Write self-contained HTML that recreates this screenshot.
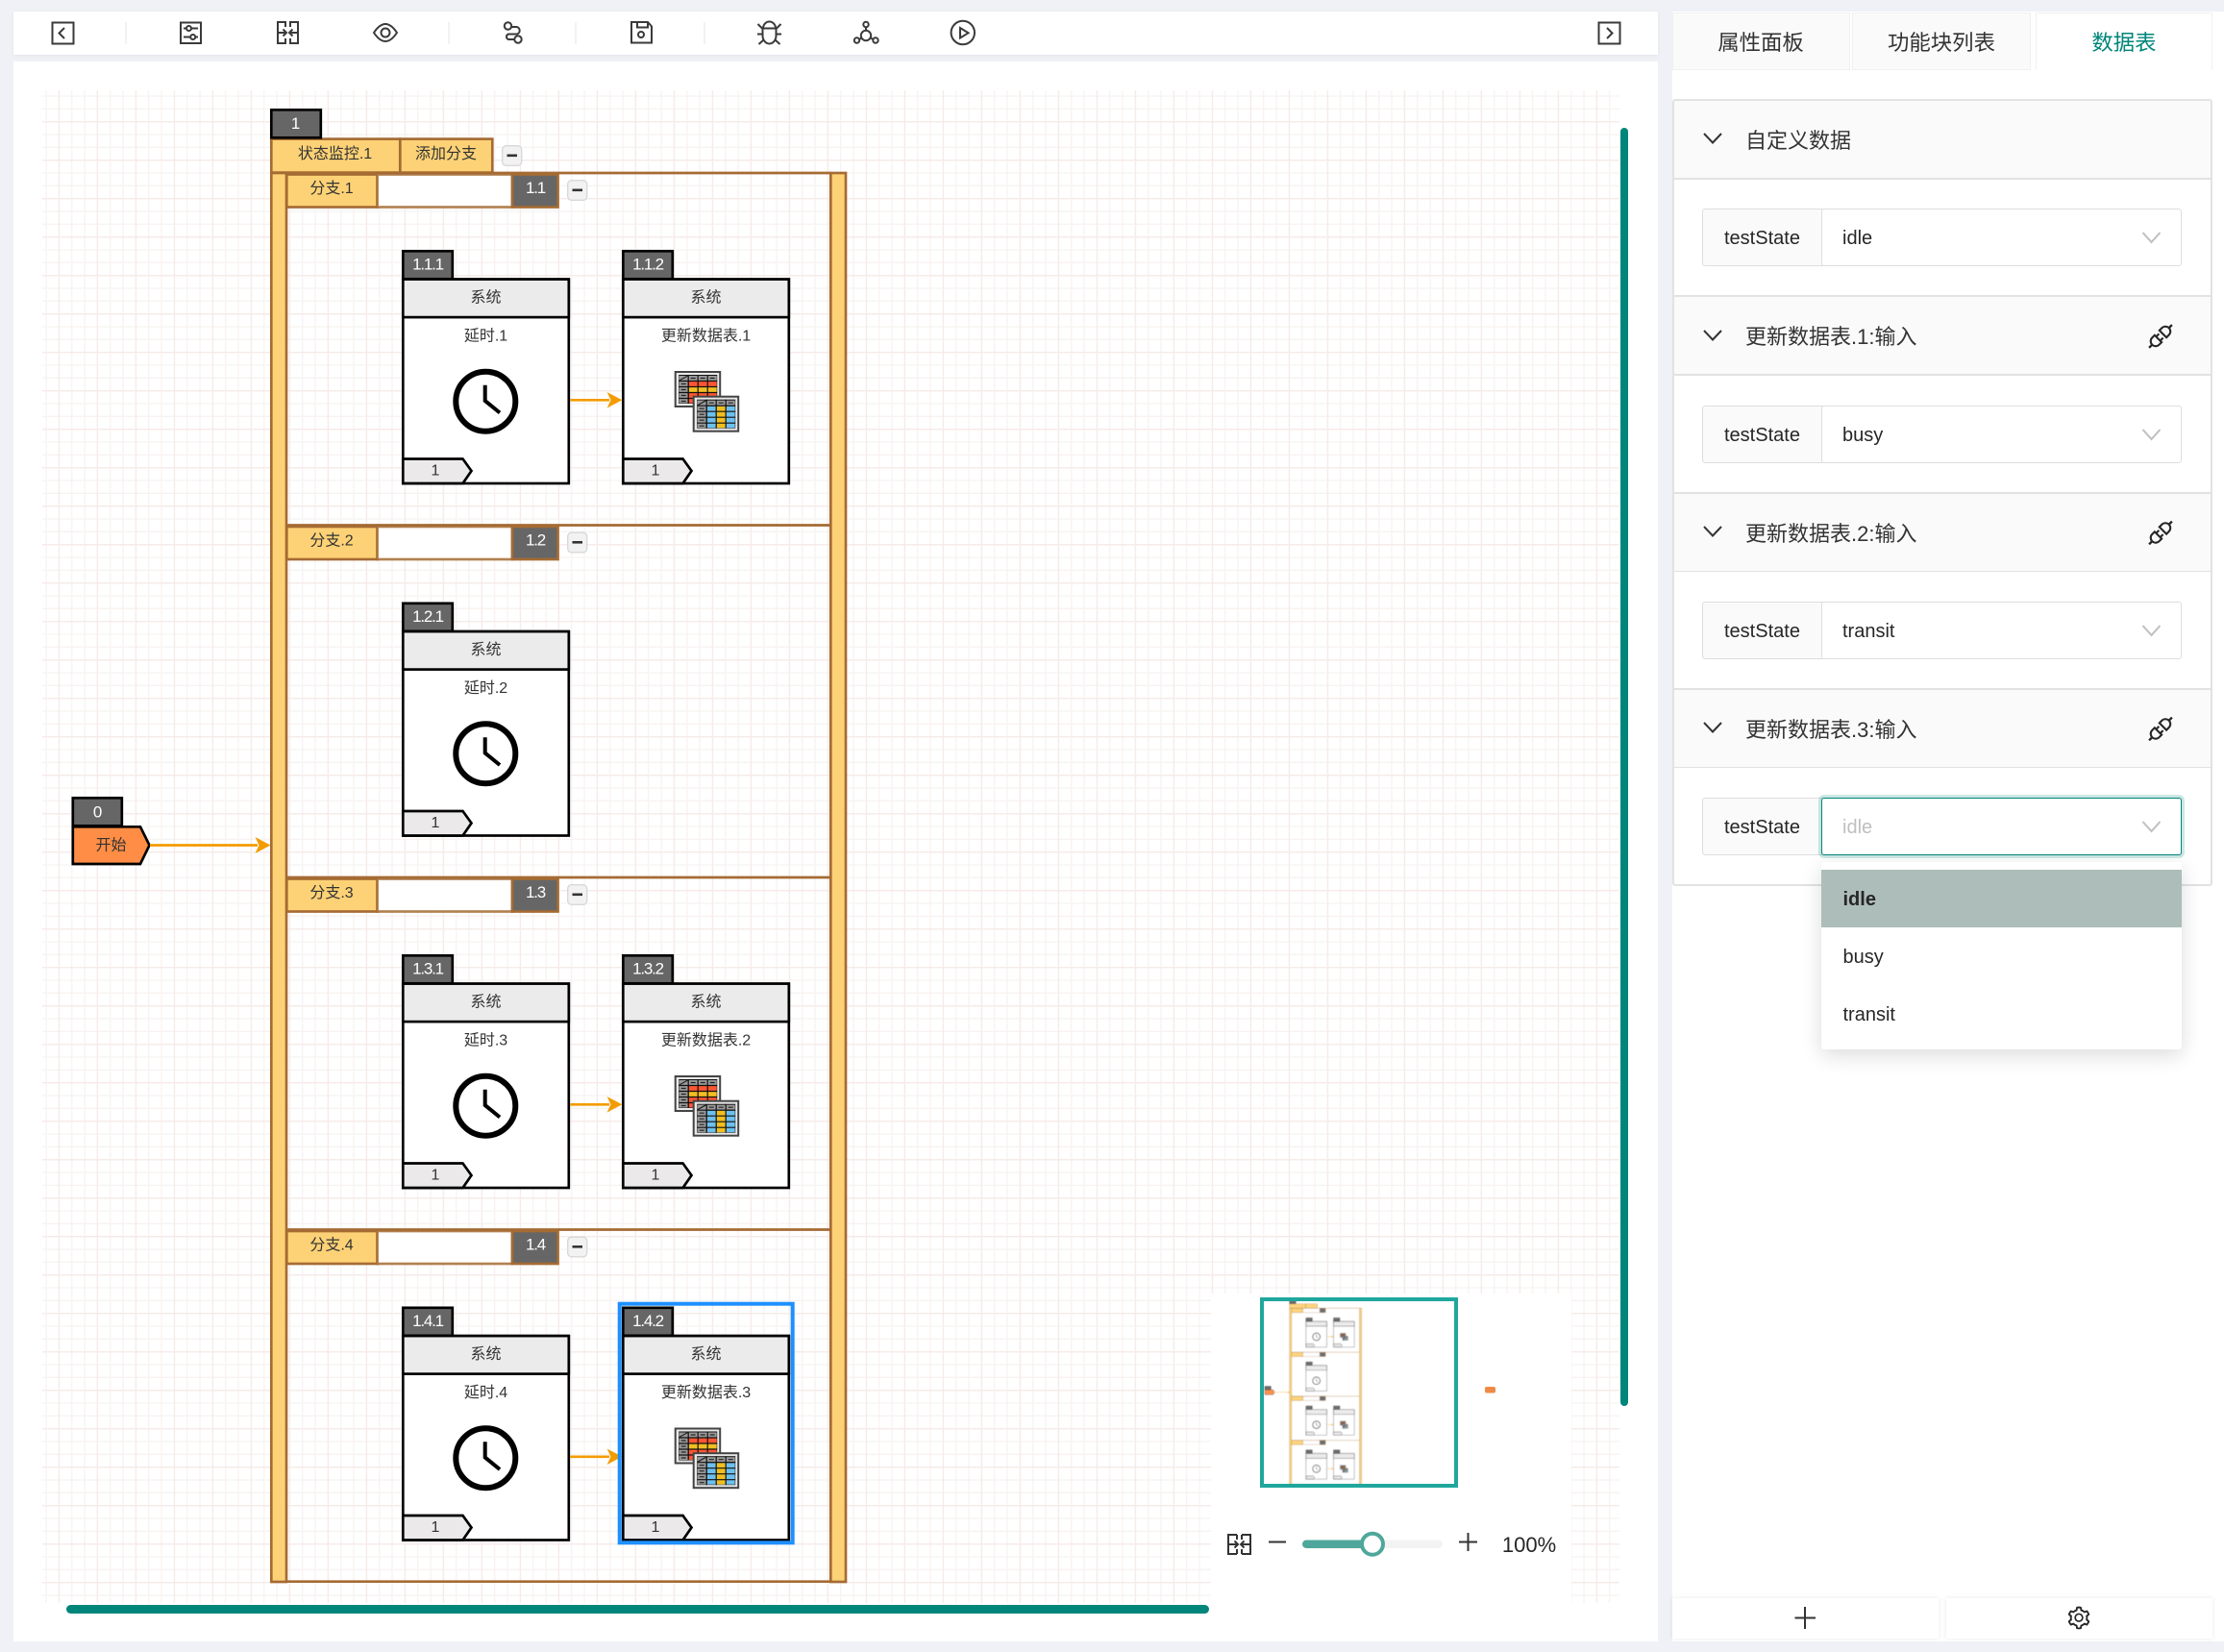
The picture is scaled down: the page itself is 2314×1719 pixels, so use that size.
<!DOCTYPE html>
<html lang="zh"><head><meta charset="utf-8"><title>流程编辑器</title>
<style>
html,body{margin:0;padding:0}
body{width:2314px;height:1719px;position:relative;overflow:hidden;background:#eff1f6;font-family:"Liberation Sans","Noto Sans CJK SC",sans-serif;color:#262626}
.a{position:absolute;box-sizing:border-box}
.tab{top:13px;height:60px;background:#fafafa;border:1px solid #f0f0f0;font-size:22.4px;display:flex;align-items:center;justify-content:center;color:#333}
.ph{left:1740px;width:562px;height:84px;background:#fafafa;border:2px solid #e2e2e2;font-size:22px;display:flex;align-items:center;padding-left:74px;color:#333}
.pb{left:1740px;width:562px;background:#fff;border-left:2px solid #e2e2e2;border-right:2px solid #e2e2e2}
.lab{left:1771px;width:126px;height:60px;background:#fafafa;border:1.5px solid #dedede;border-radius:3px 0 0 3px;font-size:20px;display:flex;align-items:center;padding:2px 0 0 22px;color:#262626}
.sel{left:1895px;width:375px;height:60px;background:#fff;border:1.5px solid #dedede;border-radius:3px;font-size:20px;display:flex;align-items:center;padding:2px 0 0 21px;color:#262626}
.opt{left:1895px;width:375px;height:60px;font-size:20px;display:flex;align-items:center;padding:2px 0 0 22.5px;color:#262626}
svg{position:absolute;overflow:visible}
svg text{font-family:"Liberation Sans","Noto Sans CJK SC",sans-serif;font-size:16px;fill:#333;text-anchor:middle;dominant-baseline:central}
svg text.w{fill:#fff;font-size:17px;letter-spacing:-1.2px}
</style></head><body>

<div class="a" style="left:14px;top:12px;width:1711px;height:45px;background:#fff;box-shadow:0 1px 4px rgba(0,0,0,.06)"></div>
<div class="a" style="left:14px;top:64px;width:1711px;height:1644px;background:#fff"></div>
<div class="a" style="left:1740px;top:12px;width:574px;height:1696px;background:#fff"></div>

<div class="a tab" style="left:1740px;width:185px;padding-right:1px">属性面板</div>
<div class="a tab" style="left:1927px;width:186px">功能块列表</div>
<div class="a tab" style="left:2118px;width:184px;background:#fff;color:#00857a;border-bottom-color:#fff">数据表</div>

<div class="a ph" style="top:103px;border-radius:3px 3px 0 0">自定义数据</div>
<div class="a pb" style="top:187px;height:121px"></div>
<div class="a ph" style="top:307px">更新数据表.1:输入</div>
<div class="a pb" style="top:391px;height:121px"></div>
<div class="a ph" style="top:511.5px">更新数据表.2:输入</div>
<div class="a pb" style="top:595px;height:122px"></div>
<div class="a ph" style="top:716px">更新数据表.3:输入</div>
<div class="a pb" style="top:799px;height:123px;border-bottom:2px solid #e2e2e2;border-radius:0 0 3px 3px"></div>

<div class="a lab" style="top:217px">testState</div><div class="a sel" style="top:217px">idle</div>
<div class="a lab" style="top:422px">testState</div><div class="a sel" style="top:422px">busy</div>
<div class="a lab" style="top:626px">testState</div><div class="a sel" style="top:626px">transit</div>
<div class="a lab" style="top:830px">testState</div>
<div class="a sel" style="top:830px;border-color:#00857a;color:#bfbfbf;box-shadow:0 0 0 3px rgba(0,133,122,.2)">idle</div>

<div class="a" style="left:1895px;top:897px;width:375px;height:195px;background:#fff;border-radius:3px;box-shadow:0 6px 22px rgba(0,0,0,.14)"></div>
<div class="a opt" style="top:905px;background:#adbdba;font-weight:bold">idle</div>
<div class="a opt" style="top:965px">busy</div>
<div class="a opt" style="top:1025px">transit</div>

<div class="a" style="left:1740px;top:1663px;width:277px;height:42px;background:#fff;box-shadow:0 0 5px rgba(0,0,0,.09)"></div>
<div class="a" style="left:2025px;top:1663px;width:277px;height:42px;background:#fff;box-shadow:0 0 5px rgba(0,0,0,.09)"></div>

<svg width="2314" height="1719" viewBox="0 0 2314 1719" style="left:0;top:0">
<defs>
<pattern id="grid" patternUnits="userSpaceOnUse" width="40" height="40" x="60.7" y="6">
<path d="M.67 0V40M14 0V40M27.33 0V40M0 .67H40M0 14H40M0 27.33H40" stroke="#f8f3f1" stroke-width="1.33" fill="none"/>
<path d="M.67 0V40M0 .67H40" stroke="#f6ebe8" stroke-width="1.4" fill="none"/>
</pattern>
<g id="tbl-a">
<rect x="1" y="1" width="46.5" height="36" fill="#e8e8e8" stroke="#444" stroke-width="2"/>
<rect x="4.5" y="4" width="40" height="30" fill="#111"/>
<rect x="5" y="5" width="39" height="5" fill="#9a9a9a"/><rect x="5" y="5" width="9" height="28.5" fill="#9a9a9a"/>
<rect x="15" y="11" width="29" height="5" fill="#ff5533"/><rect x="15" y="17" width="29" height="5" fill="#f2be1f"/>
<rect x="15" y="23" width="29" height="10.5" fill="#ff5533"/>
<path d="M14.5 4V34M24.5 4V34M34.5 4V34M4.5 10.5H44.5M4.5 16.5H44.5M4.5 22.5H44.5M4.5 28.5H44.5" stroke="#111" stroke-width="1.2" fill="none"/>
<path d="M5 10L14 5M17 7.5H22M27 7.5H32M37 7.5H42M7 13.5H12M7 19.5H12M7 25.5H12M7 31.5H12" stroke="#222" stroke-width="1.2" fill="none"/>
</g>
<g id="tbl-b">
<rect x="1" y="1" width="46.5" height="36" fill="#e8e8e8" stroke="#444" stroke-width="2"/>
<rect x="4.5" y="4" width="40" height="30" fill="#111"/>
<rect x="5" y="5" width="39" height="5" fill="#9a9a9a"/><rect x="5" y="5" width="9" height="28.5" fill="#9a9a9a"/>
<rect x="15" y="11" width="29" height="22.5" fill="#6cc0ef"/><rect x="25" y="11" width="9.5" height="22.5" fill="#f2be1f"/>
<path d="M14.5 4V34M24.5 4V34M34.5 4V34M4.5 10.5H44.5M4.5 16.5H44.5M4.5 22.5H44.5M4.5 28.5H44.5" stroke="#111" stroke-width="1.2" fill="none"/>
<path d="M5 10L14 5M17 7.5H22M27 7.5H32M37 7.5H42M7 13.5H12M7 19.5H12M7 25.5H12M7 31.5H12" stroke="#222" stroke-width="1.2" fill="none"/>
</g>
<g id="node">
<rect x="419.3" y="261.3" width="51.5" height="29" fill="#666" stroke="#000" stroke-width="2.67"/>
<rect x="419.3" y="290.6" width="172.5" height="212.4" fill="#fff" stroke="#000" stroke-width="2.67"/>
<rect x="419.3" y="290.6" width="172.5" height="39.5" fill="#ebebeb" stroke="#000" stroke-width="2.67"/>
<path d="M419.3 477.5H481.5L490.5 490L481.5 503H419.3Z" fill="#ebe9ea" stroke="#000" stroke-width="2.67"/>
</g>
<g id="clock"><use href="#node"/>
<circle cx="505.3" cy="417.7" r="31" fill="none" stroke="#000" stroke-width="6"/>
<path d="M504.7 400.7V417L520 429.5" fill="none" stroke="#000" stroke-width="4"/>
</g>
<g id="n-t"><use href="#node"/>
<use href="#tbl-a" transform="translate(472.7 386)"/>
<use href="#tbl-b" transform="translate(491.7 411.7)"/>
</g>
<g id="arrow"><path d="M593 416.3H634" stroke="#f39c00" stroke-width="2.67" fill="none"/><path d="M631.6 408L647.3 416.3L631.6 424.6L635.5 416.3Z" fill="#f39c00"/></g>
<g id="branch">
<rect x="298.3" y="181.5" width="94.3" height="34" fill="#fdd276" stroke="#a56b33" stroke-width="2.67"/>
<rect x="392.6" y="181.5" width="140.4" height="34" fill="#fff" stroke="#a56b33" stroke-width="2.67" stroke-opacity=".85"/>
<rect x="533" y="181.5" width="47.5" height="34" fill="#666" stroke="#a56b33" stroke-width="2.67"/>
</g>
<g id="minus"><rect x=".7" y=".7" width="20" height="20.6" rx="4" fill="#f2f2f2" stroke="#d8d8d8" stroke-width="1.33"/><path d="M5.5 10.8H16" stroke="#333" stroke-width="2.6"/></g>
<g id="shapes">
<rect x="282.3" y="180" width="15.7" height="1466" fill="#fdd276" stroke="#a56b33" stroke-width="2.67"/>
<rect x="864.3" y="180" width="15.7" height="1466" fill="#fdd276" stroke="#a56b33" stroke-width="2.67"/>
<path d="M298 180H864M298 546.5H864M298 913H864M298 1279.5H864M298 1645.7H864" stroke="#a56b33" stroke-width="2.67" fill="none"/>
<rect x="282.3" y="144.6" width="134" height="35" fill="#fdd276" stroke="#a56b33" stroke-width="2.67"/>
<rect x="416.3" y="144.6" width="96" height="35" fill="#fdd276" stroke="#a56b33" stroke-width="2.67"/>
<rect x="282.3" y="114.3" width="51.5" height="29" fill="#666" stroke="#000" stroke-width="2.67"/>
<use href="#branch"/><use href="#branch" y="366.5"/><use href="#branch" y="733"/><use href="#branch" y="1099.5"/>
<use href="#clock"/><use href="#n-t" x="229"/><use href="#arrow"/>
<use href="#clock" y="366.5"/>
<use href="#clock" y="733"/><use href="#n-t" x="229" y="733"/><use href="#arrow" y="733"/>
<use href="#clock" y="1099.5"/><use href="#n-t" x="229" y="1099.5"/><use href="#arrow" y="1099.5"/>
<rect x="75.8" y="830.3" width="51" height="29" fill="#666" stroke="#000" stroke-width="2.67"/>
<path d="M75.8 860.3H146L155.5 879.5L146 899H75.8Z" fill="#ff8d45" stroke="#000" stroke-width="2.67"/>
<path d="M156 879.5H268" stroke="#f39c00" stroke-width="2.67" fill="none"/><path d="M265.5 871L281.5 879.5L265.5 888L269.5 879.5Z" fill="#f39c00"/>
</g>
<clipPath id="mm"><rect x="1315" y="1354" width="198" height="190"/></clipPath>
<filter id="bl" x="-5%" y="-5%" width="110%" height="110%"><feGaussianBlur stdDeviation=".45"/></filter>
</defs>

<rect x="44" y="94" width="1641" height="1574" fill="url(#grid)"/>

<!-- diagram -->
<use href="#shapes"/>
<use href="#minus" transform="translate(522 151)"/>
<use href="#minus" transform="translate(590 187)"/><use href="#minus" transform="translate(590 553.5)"/><use href="#minus" transform="translate(590 920)"/><use href="#minus" transform="translate(590 1286.5)"/>

<text x="307" y="128.5" class="w">1</text>
<text x="348.5" y="160.5">状态监控.1</text><text x="464" y="160.5">添加分支</text>
<text x="101" y="845" class="w">0</text><text x="115.5" y="880">开始</text>

<text x="345" y="196.5">分支.1</text><text x="557" y="195.5" class="w">1.1</text>
<text x="345" y="563">分支.2</text><text x="557" y="562" class="w">1.2</text>
<text x="345" y="929.5">分支.3</text><text x="557" y="928.5" class="w">1.3</text>
<text x="345" y="1296">分支.4</text><text x="557" y="1295" class="w">1.4</text>

<text x="445" y="275" class="w">1.1.1</text><text x="505.5" y="310">系统</text><text x="505.5" y="350">延时.1</text><text x="453" y="490">1</text>
<text x="674" y="275" class="w">1.1.2</text><text x="734.5" y="310">系统</text><text x="734.5" y="350">更新数据表.1</text><text x="682" y="490">1</text>
<text x="445" y="641.5" class="w">1.2.1</text><text x="505.5" y="676.5">系统</text><text x="505.5" y="716.5">延时.2</text><text x="453" y="856.5">1</text>
<text x="445" y="1008" class="w">1.3.1</text><text x="505.5" y="1043">系统</text><text x="505.5" y="1083">延时.3</text><text x="453" y="1223">1</text>
<text x="674" y="1008" class="w">1.3.2</text><text x="734.5" y="1043">系统</text><text x="734.5" y="1083">更新数据表.2</text><text x="682" y="1223">1</text>
<text x="445" y="1374.5" class="w">1.4.1</text><text x="505.5" y="1409.5">系统</text><text x="505.5" y="1449.5">延时.4</text><text x="453" y="1589.5">1</text>
<text x="674" y="1374.5" class="w">1.4.2</text><text x="734.5" y="1409.5">系统</text><text x="734.5" y="1449.5">更新数据表.3</text><text x="682" y="1589.5">1</text>

<rect x="644.7" y="1356.7" width="180" height="248.6" fill="none" stroke="#1e90ff" stroke-width="4"/>

<!-- minimap -->
<rect x="1260" y="1346" width="375" height="322" fill="#fff"/>
<g clip-path="url(#mm)"><g filter="url(#bl)" opacity=".95"><g transform="translate(1306.5 1338.75) scale(.125)"><use href="#shapes"/></g></g></g>
<rect x="1313" y="1352" width="202" height="194" fill="none" stroke="#1fa79d" stroke-width="4"/>
<rect x="1545" y="1443" width="11" height="6.5" rx="2" fill="#ef8a45"/>

<!-- zoom controls -->
<g fill="none" stroke="#333" stroke-width="2">
<path d="M1287 1597H1278V1617H1287M1292 1597H1301V1617H1292"/>
<path d="M1287 1597V1602M1287 1612V1617M1292 1597V1602M1292 1612V1617"/>
<path d="M1278 1607H1288M1284.5 1603.500L1288 1607L1284.500 1610.500M1301 1607H1291M1294.500 1603.500L1291 1607L1294.500 1610.500"/>
<path d="M1320 1604.500H1338M1518 1604.500H1537M1527.500 1595V1614"/>
</g>
<rect x="1355" y="1602.500" width="146" height="8.500" rx="4.200" fill="#f3f3f3"/>
<rect x="1355" y="1602.500" width="73" height="8.500" rx="4.200" fill="#4fa79b"/>
<circle cx="1428" cy="1606.700" r="11" fill="#fff" stroke="#4fa79b" stroke-width="4"/>
<text x="1591" y="1607.500" style="font-size:22px;fill:#262626">100%</text>

<!-- scrollbars -->
<rect x="1686" y="133" width="8" height="1330" rx="4" fill="#00857a"/>
<rect x="69" y="1670" width="1189" height="9" rx="4.500" fill="#00857a"/>

<!-- toolbar -->
<path d="M131 23V46M467 23V46M599 23V46M733 23V46" stroke="#eeeeee" stroke-width="1.500"/>
<g fill="none" stroke="#3a3a3a" stroke-width="2">
<rect x="54.500" y="23.500" width="22" height="22"/><path d="M67 29L61.500 34.500L67 40"/>
<rect x="188" y="23.500" width="21" height="21.500"/><path d="M191 29.500H194M199 29.500H206M191 38.500H198M203 38.500H206"/><circle cx="196.500" cy="29.500" r="2.500"/><circle cx="200.700" cy="38.500" r="2.500"/>
<path d="M297 28V23H289V45H297V40M302 28V23H310V45H302V40"/>
<path d="M289 34H298M294.500 30.500L298 34L294.500 37.500M310 34H301M304.500 30.500L301 34L304.500 37.500"/>
<path d="M389 34Q401 16 413 34Q401 52 389 34Z"/><circle cx="401" cy="34" r="4.500"/>
<circle cx="528.500" cy="27" r="3.700"/><circle cx="539" cy="41" r="3.700"/><path d="M532 28H537.500A3.800 3.800 0 0 1 537.500 35.500H529A2.900 2.900 0 0 0 529 41H535.300"/>
<path d="M657 23H674L678 27.500V44.500H657Z"/><path d="M663 23V28.500H674V23"/><circle cx="667" cy="36" r="3"/>
<path d="M794 29.500A6.500 7 0 0 1 807 29.500M793.500 29.500H807.500V37A7 8.500 0 0 1 793.500 37Z"/><path d="M788.500 25L793.500 30M812.500 25L807.500 30M788 35.500H793.500M807.500 35.500H813M789.500 46L794.500 41.500M811.500 46L806.500 41.500"/>
<circle cx="901" cy="25.500" r="2.700"/><circle cx="901" cy="37" r="5.200"/><circle cx="891.500" cy="42" r="2.700"/><circle cx="911" cy="42" r="2.700"/><path d="M901 28.200V31.800M894 41L896.400 39.500M908.500 41L906 39.500"/>
<circle cx="1001.800" cy="34" r="12.200"/><path d="M999 29L1007.500 34.300L999 39.500Z"/>
<rect x="1663.500" y="23.500" width="22" height="22"/><path d="M1672 29L1677.500 34.500L1672 40"/>
</g>

<!-- panel chevrons and icons -->
<g fill="none" stroke="#333" stroke-width="2">
<path d="M1773 139L1782 148.500L1791 139M1773 344L1782 353.500L1791 344M1773 548L1782 557.500L1791 548M1773 752L1782 761.500L1791 752"/>
<path d="M1878 1672V1695M1867.500 1683.500H1889"/>
</g>
<path d="M2229.500 242L2238.500 252L2247.500 242M2229.500 447L2238.500 457L2247.500 447M2229.500 651L2238.500 661L2247.500 651M2229.500 855L2238.500 865L2247.500 855" fill="none" stroke="#bfbfbf" stroke-width="2"/>
<g id="api"><path transform="translate(2232.100 334.100) scale(.031)" fill="#262626" d="M917.7 148.8l-42.4-42.4c-1.6-1.6-3.6-2.3-5.7-2.3s-4.1.8-5.7 2.3l-76.1 76.1a199.27 199.27 0 0 0-112.1-34.3c-51.2 0-102.4 19.5-141.5 58.6L432.3 308.7a8.03 8.03 0 0 0 0 11.3L704 591.7c1.6 1.6 3.6 2.3 5.7 2.3 2 0 4.1-.8 5.7-2.3l101.9-101.9c68.9-69 77-175.7 24.3-253.5l76.1-76.1c3.1-3.2 3.1-8.3 0-11.4zM769.1 441.7l-59.4 59.4-186.8-186.8 59.4-59.4c24.9-24.9 58.1-38.7 93.4-38.7 35.3 0 68.4 13.7 93.4 38.7 24.9 24.9 38.7 58.1 38.7 93.4 0 35.3-13.8 68.4-38.7 93.4zm-190.2 105a8.03 8.03 0 0 0-11.3 0L501 613.3 410.7 523l66.7-66.7c3.1-3.1 3.1-8.2 0-11.3L441 408.6a8.03 8.03 0 0 0-11.3 0L363 475.3l-43-43a7.85 7.85 0 0 0-5.7-2.3c-2 0-4.1.8-5.7 2.3L206.8 534.2c-68.9 69-77 175.7-24.3 253.5l-76.1 76.1a8.03 8.03 0 0 0 0 11.3l42.4 42.4c1.6 1.6 3.6 2.3 5.7 2.3s4.1-.8 5.700-2.300l76.100-76.100c33.700 22.900 72.900 34.300 112.100 34.300 51.200 0 102.400-19.500 141.500-58.600l101.900-101.900c3.100-3.100 3.100-8.200 0-11.300l-43-43 66.700-66.700c3.100-3.100 3.100-8.200 0-11.300l-36.600-36.200zM441.700 769.100a131.320 131.320 0 0 1-93.400 38.700c-35.300 0-68.400-13.700-93.400-38.700a131.320 131.320 0 0 1-38.700-93.400c0-35.300 13.700-68.400 38.700-93.400l59.400-59.400 186.800 186.800-59.400 59.400z"/></g>
<use href="#api" y="204.500"/><use href="#api" y="408.500"/>
<path transform="translate(2149.500 1670) scale(.0264)" fill="#262626" d="M924.8 625.7l-65.5-56c3.1-19 4.700-38.400 4.700-57.800s-1.600-38.800-4.700-57.800l65.500-56a32.030 32.030 0 0 0 9.300-35.200l-.9-2.600a443.740 443.740 0 0 0-79.700-137.900l-1.800-2.100a32.120 32.120 0 0 0-35.100-9.500l-81.300 28.900c-30-24.600-63.500-44-99.700-57.600l-15.700-85a32.050 32.050 0 0 0-25.800-25.700l-2.700-.5c-52.100-9.400-106.900-9.400-159 0l-2.700.5a32.050 32.050 0 0 0-25.800 25.700l-15.800 85.400a351.860 351.860 0 0 0-99 57.400l-81.900-29.100a32 32 0 0 0-35.100 9.500l-1.800 2.100a446.020 446.020 0 0 0-79.700 137.900l-.9 2.600c-4.500 12.500-.8 26.500 9.300 35.200l66.300 56.600c-3.100 18.800-4.600 38-4.600 57.100 0 19.200 1.500 38.400 4.600 57.100L99 625.500a32.030 32.030 0 0 0-9.300 35.200l.9 2.600c18.100 50.400 44.900 96.900 79.700 137.900l1.800 2.100a32.120 32.120 0 0 0 35.100 9.500l81.900-29.100c29.800 24.500 63.100 43.900 99 57.400l15.800 85.400a32.050 32.050 0 0 0 25.800 25.700l2.700.5a449.400 449.400 0 0 0 159 0l2.700-.5a32.050 32.050 0 0 0 25.800-25.700l15.700-85a350 350 0 0 0 99.700-57.600l81.300 28.900a32 32 0 0 0 35.100-9.500l1.800-2.100c34.800-41.100 61.600-87.500 79.700-137.900l.9-2.600c4.500-12.300.8-26.300-9.300-35zM788.300 465.900c2.500 15.100 3.800 30.600 3.800 46.100s-1.300 31-3.800 46.100l-6.600 40.100 74.700 63.900a370.030 370.030 0 0 1-42.600 73.600L721 702.800l-31.400 25.800c-23.900 19.600-50.500 35-79.300 45.800l-38.100 14.300-17.900 97a377.500 377.500 0 0 1-85 0l-17.900-97.200-37.800-14.500c-28.500-10.800-55-26.200-78.700-45.700l-31.400-25.900-93.400 33.200c-17-22.900-31.200-47.600-42.600-73.600l75.500-64.500-6.500-40c-2.400-14.900-3.700-30.300-3.700-45.500 0-15.300 1.200-30.600 3.700-45.500l6.500-40-75.500-64.500c11.300-26.100 25.600-50.700 42.600-73.600l93.400 33.200 31.400-25.900c23.700-19.500 50.200-34.900 78.700-45.700l37.900-14.300 17.900-97.200c28.100-3.200 56.800-3.200 85 0l17.900 97 38.100 14.300c28.700 10.800 55.400 26.200 79.300 45.800l31.400 25.800 92.800-32.900c17 22.900 31.200 47.600 42.600 73.600L781.800 426l6.500 39.900zM512 326c-97.200 0-176 78.800-176 176s78.800 176 176 176 176-78.800 176-176-78.800-176-176-176zm79.200 255.200A111.600 111.600 0 0 1 512 614c-29.900 0-58-11.700-79.200-32.800A111.600 111.600 0 0 1 400 502c0-29.900 11.700-58 32.800-79.200C454 401.600 482.100 390 512 390c29.900 0 58 11.600 79.200 32.800A111.600 111.600 0 0 1 624 502c0 29.900-11.700 58-32.800 79.200z"/>
</svg>
</body></html>
